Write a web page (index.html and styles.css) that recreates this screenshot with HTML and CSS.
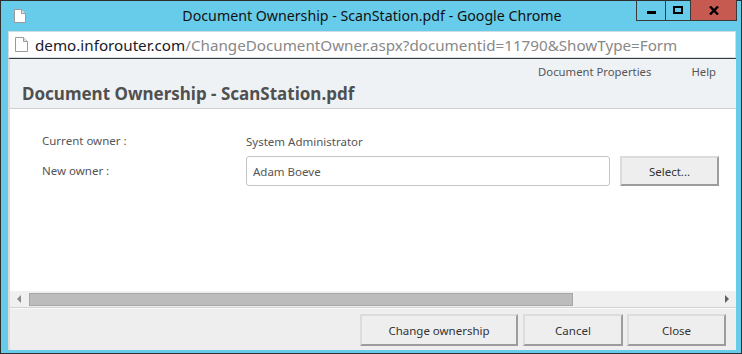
FILE: index.html
```html
<!DOCTYPE html>
<html lang="en">
<head>
  <meta charset="UTF-8" />
  <title>Document Ownership - ScanStation.pdf - Google Chrome</title>
  <link rel="stylesheet" href="styles.css">
</head>
<body>

<div class="window">
  <div class="titlebar">
    <svg class="page-icon" width="12" height="14" viewBox="0 0 12 14">
      <path d="M0.5 0.5 H7.5 L11.5 4.5 V13.5 H0.5 Z" fill="#fff" stroke="#9a9a9a"/>
      <path d="M7.5 0.5 V4.5 H11.5" fill="#e6e6e6" stroke="#9a9a9a"/>
    </svg>
    <div class="title">Document Ownership - ScanStation.pdf - Google Chrome</div>
    <div class="caption-buttons">
      <div class="cap cap-min"><span class="min-glyph"></span></div>
      <div class="cap cap-max"><span class="max-glyph"></span></div>
      <div class="cap cap-close">
        <svg width="10" height="9" viewBox="0 0 10 9">
          <path d="M1 0.5 L9 8.5 M9 0.5 L1 8.5" stroke="#000" stroke-width="2.4"/>
        </svg>
      </div>
    </div>
  </div>

  <div class="addressbar">
    <svg class="page-icon" width="13" height="15" viewBox="0 0 13 15">
      <path d="M0.5 0.5 H8.5 L12.5 4.5 V14.5 H0.5 Z" fill="#fff" stroke="#9a9a9a"/>
      <path d="M8.5 0.5 V4.5 H12.5" fill="#e6e6e6" stroke="#9a9a9a"/>
    </svg>
    <span class="host">demo.inforouter.com</span><span class="path">/ChangeDocumentOwner.aspx?documentid=11790&amp;ShowType=Form</span>
  </div>

  <div class="viewport">
    <div class="page-header">
      <div class="header-links">
        <a href="#">Document Properties</a>
        <a href="#">Help</a>
      </div>
      <h1>Document Ownership - ScanStation.pdf</h1>
    </div>

    <div class="form">
      <div class="form-row">
        <div class="label">Current owner :</div>
        <div class="value">System Administrator</div>
      </div>
      <div class="form-row">
        <div class="label">New owner :</div>
        <input class="owner-input" type="text" value="Adam Boeve">
        <button class="btn btn-select">Select...</button>
      </div>
    </div>

    <div class="hscroll">
      <span class="arrow arrow-left"></span>
      <div class="track"><div class="thumb"></div></div>
      <span class="arrow arrow-right"></span>
    </div>

    <div class="footer">
      <button class="btn btn-wide">Change ownership</button>
      <button class="btn btn-cancel">Cancel</button>
      <button class="btn">Close</button>
    </div>
  </div>
</div>

</body>
</html>
```

FILE: styles.css
```css
body {
  margin: 0;
  font-family: "Noto Sans", "Open Sans", sans-serif;
}

.window {
  width: 742px;
  height: 354px;
  box-sizing: border-box;
  border: 1px solid #2e2e2e;
  background: #67cbea;
  padding: 0 5px 3px 7px;
  display: flex;
  flex-direction: column;
}

/* title bar */

.titlebar {
  height: 30px;
  flex: none;
  display: grid;
  grid-template-columns: 1fr auto 1fr;
  align-items: center;
}

.titlebar .page-icon {
  margin-left: 6px;
}

.title {
  font-size: 14.2px;
  color: #111;
  white-space: nowrap;
  padding-bottom: 1px;
}

.caption-buttons {
  justify-self: end;
  align-self: start;
  display: flex;
  height: 21px;
  margin-top: -1px;
  margin-right: -1px;
}

.cap {
  box-sizing: border-box;
  height: 21px;
  border: 1px solid #3a3a3a;
  border-top: none;
  display: flex;
  align-items: center;
  justify-content: center;
}

.cap-min {
  width: 30px;
}

.cap-max {
  width: 25px;
  border-left: none;
}

.cap-close {
  width: 46px;
  border-left: none;
  background: #c75a50;
}

.min-glyph {
  width: 9px;
  height: 3px;
  background: #000;
  margin-top: 5px;
}

.max-glyph {
  width: 6px;
  height: 4px;
  border: 2px solid #000;
}

/* address bar */

.addressbar {
  height: 27px;
  flex: none;
  box-sizing: border-box;
  background: #fff;
  border: 1px solid #cfdde4;
  display: flex;
  align-items: center;
  padding-left: 6px;
  font-size: 15.2px;
  white-space: nowrap;
  overflow: hidden;
}

.addressbar .page-icon {
  margin-right: 7px;
}

.host {
  color: #1a1a2a;
}

.path {
  color: #888;
}

/* page */

.viewport {
  flex: 1;
  display: flex;
  flex-direction: column;
  background: #fff;
  border-top: 1px solid #3b3b3b;
  border-left: 2px solid #dcdcdc;
  color: #555;
}

.page-header {
  height: 50px;
  flex: none;
  box-sizing: border-box;
  background: #eff2f5;
  border-bottom: 1px solid #cdd0d3;
  padding: 5px 20px 0 12px;
}

.header-links {
  display: flex;
  justify-content: flex-end;
  gap: 40px;
  font-size: 11.3px;
  line-height: 16px;
}

.header-links a {
  color: #555;
  text-decoration: none;
}

h1 {
  margin: 3px 0 0;
  font-size: 17px;
  line-height: 22px;
  font-weight: bold;
  color: #505050;
}

.form {
  flex: 1;
  padding: 22px 0 0 32px;
  font-size: 11.5px;
}

.form-row {
  display: flex;
  align-items: center;
  margin-bottom: 5px;
}

.form-row .label {
  width: 204px;
  line-height: 20px;
}

.owner-input {
  box-sizing: border-box;
  width: 364px;
  height: 30px;
  border: 1px solid #c4c4c4;
  border-radius: 3px;
  padding: 0 6px;
  font-family: inherit;
  font-size: 11.5px;
  color: #555;
  outline: none;
}

.btn {
  box-sizing: border-box;
  height: 32px;
  width: 99px;
  padding: 0;
  background: #eeeeee;
  border: 2px solid #dcdcdc;
  border-right-color: #9c9c9c;
  border-bottom-color: #9c9c9c;
  font-family: inherit;
  font-size: 11.5px;
  color: #333;
}

.btn-wide {
  width: 158px;
}

.btn-cancel {
  width: 100px;
  margin-right: -1px;
}

.btn-select {
  height: 30px;
  margin-left: 10px;
}

/* horizontal scrollbar */

.hscroll {
  height: 16px;
  flex: none;
  background: #f0f0f0;
  display: flex;
  align-items: center;
}

.arrow {
  width: 0;
  height: 0;
  border-top: 4px solid transparent;
  border-bottom: 4px solid transparent;
}

.arrow-left {
  border-right: 4px solid #8a8a8a;
  margin: 0 8px 0 7px;
}

.arrow-right {
  border-left: 4px solid #606060;
  margin: 0 7px 0 8px;
}

.track {
  flex: 1;
  height: 13px;
}

.thumb {
  box-sizing: border-box;
  width: 544px;
  height: 13px;
  background: #bcbcbc;
  border: 1px solid #a6a6a6;
}

/* footer */

.footer {
  height: 43px;
  flex: none;
  box-sizing: border-box;
  background: #eeeeee;
  border-top: 1px solid #d2d2d2;
  box-shadow: inset 0 1px #fafafa;
  display: flex;
  justify-content: flex-end;
  align-items: flex-start;
  gap: 5px;
  padding: 6px 10px 0 0;
}
```
